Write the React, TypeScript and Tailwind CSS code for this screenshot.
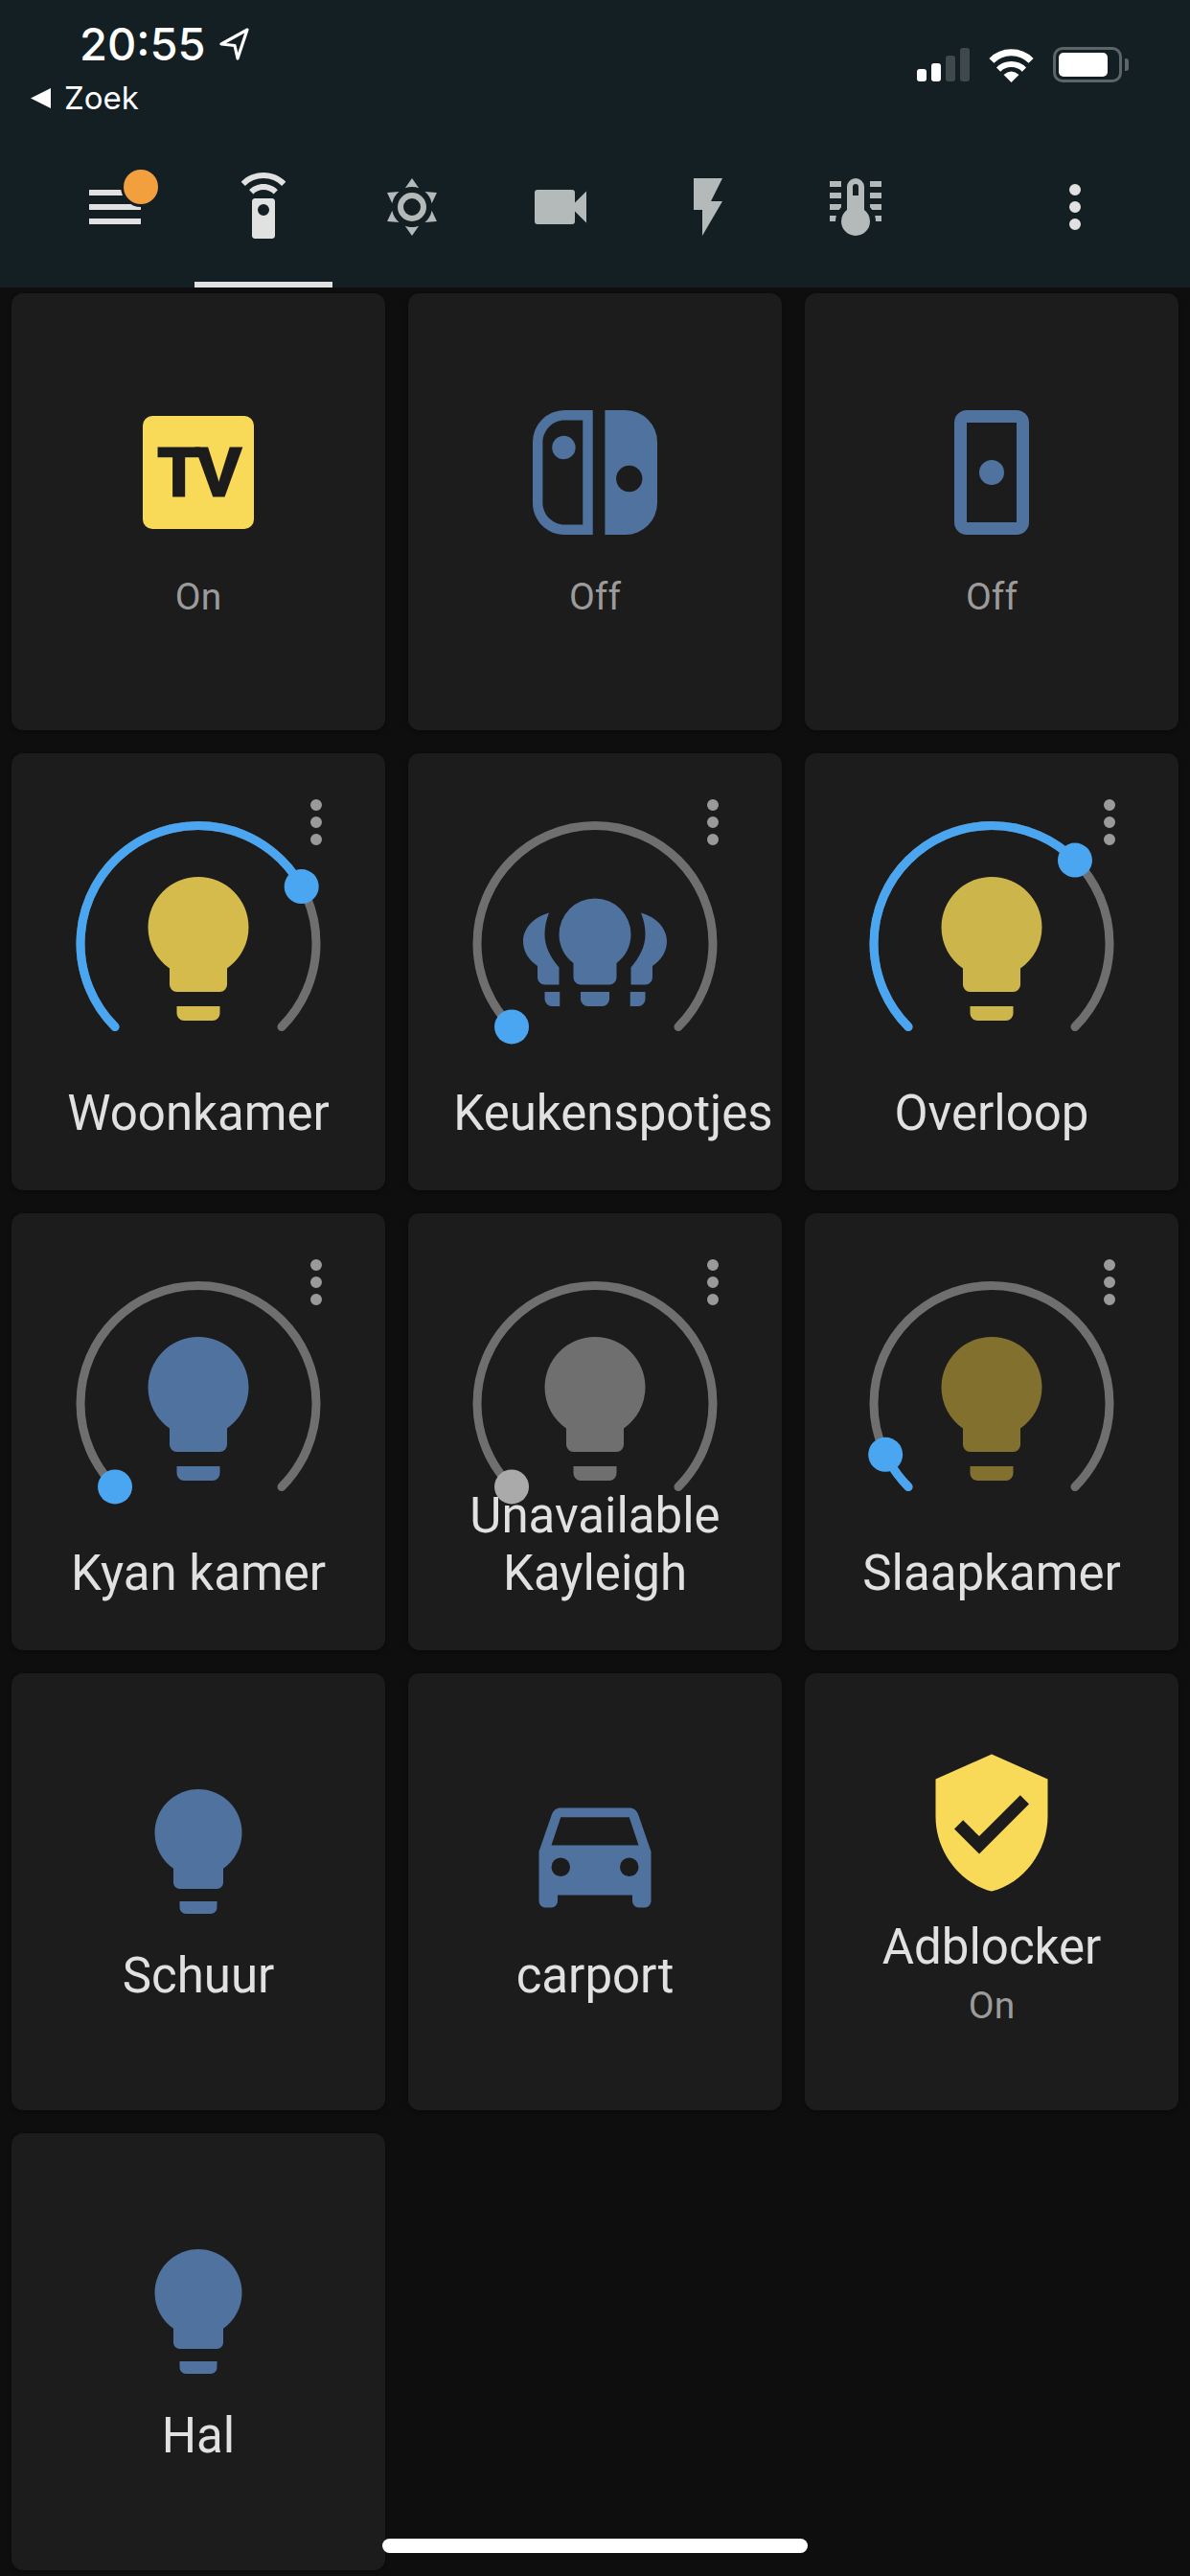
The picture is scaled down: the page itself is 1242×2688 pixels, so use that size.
const BLUE = '#4f729e';
const YELLOW = '#f8da58';

const Mdi = ({ d, size = 72, color = 'currentColor' }: { d: string; size?: number; color?: string }) => (
  <svg width={size} height={size} viewBox="0 0 24 24" className="block shrink-0">
    <path d={d} fill={color} fillRule="evenodd" />
  </svg>
);

const paths = {
  menu: 'M3,6H21V8H3V6M3,11H21V13H3V11M3,16H21V18H3V16Z',
  remote:
    'M12,0C8.96,0 6.21,1.23 4.22,3.22L5.63,4.63C7.26,3 9.5,2 12,2C14.5,2 16.74,3 18.36,4.64L19.78,3.22C17.79,1.23 15.04,0 12,0M7.05,6.05L8.46,7.46C9.37,6.56 10.62,6 12,6C13.38,6 14.63,6.56 15.54,7.46L16.95,6.05C15.68,4.78 13.93,4 12,4C10.07,4 8.32,4.78 7.05,6.05M15,9H9C8.45,9 8,9.45 8,10V22C8,22.55 8.45,23 9,23H15C15.55,23 16,22.55 16,22V10C16,9.45 15.55,9 15,9M12,11A2,2 0 0,1 14,13A2,2 0 0,1 12,15A2,2 0 0,1 10,13A2,2 0 0,1 12,11Z',
  sunny:
    'M12,7A5,5 0 0,1 17,12A5,5 0 0,1 12,17A5,5 0 0,1 7,12A5,5 0 0,1 12,7M12,9A3,3 0 0,0 9,12A3,3 0 0,0 12,15A3,3 0 0,0 15,12A3,3 0 0,0 12,9M12,2L14.39,5.42C13.65,5.15 12.84,5 12,5C11.16,5 10.35,5.15 9.61,5.42L12,2M3.34,7L7.5,6.65C6.9,7.16 6.36,7.78 5.94,8.5C5.5,9.24 5.25,10 5.11,10.79L3.34,7M3.36,17L5.12,13.23C5.26,14 5.53,14.78 5.95,15.5C6.37,16.24 6.91,16.86 7.5,17.37L3.36,17M20.65,7L18.88,10.79C18.74,10 18.47,9.23 18.05,8.5C17.63,7.78 17.1,7.15 16.5,6.64L20.65,7M20.64,17L16.5,17.36C17.09,16.85 17.62,16.22 18.04,15.5C18.46,14.77 18.73,14 18.87,13.21L20.64,17M12,22L9.59,18.56C10.33,18.83 11.14,19 12,19C12.82,19 13.63,18.83 14.37,18.56L12,22Z',
  video: 'M17,10.5V7A1,1 0 0,0 16,6H4A1,1 0 0,0 3,7V17A1,1 0 0,0 4,18H16A1,1 0 0,0 17,17V13.5L21,17.5V6.5L17,10.5Z',
  flash: 'M7,2V13H10V22L17,10H13L17,2H7Z',
  thermo:
    'M17,3H21V5H17V3M17,7H21V9H17V7M17,11H21V13H17.75L17,12.1V11M21,15V17H19C19,16.31 18.9,15.63 18.71,15H21M7,3V5H3V3H7M7,7V9H3V7H7M7,11V12.1L6.25,13H3V11H7M3,15H5.29C5.1,15.63 5,16.31 5,17H3V15M15,13V5A3,3 0 0,0 12,2A3,3 0 0,0 9,5V13A5,5 0 0,0 7,17A5,5 0 0,0 12,22A5,5 0 0,0 17,17A5,5 0 0,0 15,13M12,4A1,1 0 0,1 13,5V8H11V5A1,1 0 0,1 12,4Z',
  dots: 'M12,16A2,2 0 0,1 14,18A2,2 0 0,1 12,20A2,2 0 0,1 10,18A2,2 0 0,1 12,16M12,10A2,2 0 0,1 14,12A2,2 0 0,1 12,14A2,2 0 0,1 10,12A2,2 0 0,1 12,10M12,4A2,2 0 0,1 14,6A2,2 0 0,1 12,8A2,2 0 0,1 10,6A2,2 0 0,1 12,4Z',
  bulb: 'M12,2A7,7 0 0,0 5,9C5,11.38 6.19,13.47 8,14.74V17A1,1 0 0,0 9,18H15A1,1 0 0,0 16,17V14.74C17.81,13.47 19,11.38 19,9A7,7 0 0,0 12,2M9,21A1,1 0 0,0 10,22H14A1,1 0 0,0 15,21V20H9V21Z',
  group:
    'M12,5A5,5 0 0,0 7,10C7,11.7 7.8,13.1 9,14V16A1,1 0 0,0 10,17H14A1,1 0 0,0 15,16V14C16.2,13.1 17,11.7 17,10A5,5 0 0,0 12,5M10,18V19A1,1 0 0,0 11,20H13A1,1 0 0,0 14,19V18H10M5.6,7C3.5,7.6 2,9.1 2,11C2,12.4 2.8,13.6 4,14.4V16A1,1 0 0,0 5,17H7V14.6C5.8,13.2 5,11.7 5,10C5,9 5.2,8 5.6,7M5,18V19A1,1 0 0,0 6,20H7.1V18H5M18.4,7C20.5,7.6 22,9.1 22,11C22,12.4 21.2,13.6 20,14.4V16A1,1 0 0,1 19,17H17V14.6C18.2,13.2 19,11.7 19,10C19,9 18.8,8 18.4,7M19,18V19A1,1 0 0,1 18,20H16.9V18H19Z',
  nintendo:
    'M10.04,20.4H7.12C6.19,20.4 5.3,20 4.64,19.36C4,18.7 3.6,17.81 3.6,16.88V7.12C3.6,6.19 4,5.3 4.64,4.64C5.3,4 6.19,3.62 7.12,3.62H10.04V20.4M7.12,2A5.12,5.12 0 0,0 2,7.12V16.88C2,19.71 4.29,22 7.12,22H11.65V2H7.12M7,6.12A1.88,1.88 0 0,1 8.87,8A1.88,1.88 0 0,1 7,9.88A1.88,1.88 0 0,1 5.11,8A1.88,1.88 0 0,1 7,6.12M13.6,2H16.88A5.12,5.12 0 0,1 22,7.12V16.88A5.12,5.12 0 0,1 16.88,22H13.6V2M17.5,10.9A2.1,2.1 0 0,0 15.4,13A2.1,2.1 0 0,0 17.5,15.1A2.1,2.1 0 0,0 19.6,13A2.1,2.1 0 0,0 17.5,10.9Z',
  joycon:
    'M8,2H16A2,2 0 0,1 18,4V20A2,2 0 0,1 16,22H8A2,2 0 0,1 6,20V4A2,2 0 0,1 8,2M8,4V20H16V4H8M12,10A2,2 0 0,1 14,12A2,2 0 0,1 12,14A2,2 0 0,1 10,12A2,2 0 0,1 12,10Z',
  car: 'M5,11L6.5,6.5H17.5L19,11H5M17.5,13A1.5,1.5 0 0,0 16,14.5A1.5,1.5 0 0,0 17.5,16A1.5,1.5 0 0,0 19,14.5A1.5,1.5 0 0,0 17.5,13M6.5,13A1.5,1.5 0 0,0 5,14.5A1.5,1.5 0 0,0 6.5,16A1.5,1.5 0 0,0 8,14.5A1.5,1.5 0 0,0 6.5,13M18.92,6C18.72,5.42 18.16,5 17.5,5H6.5C5.84,5 5.28,5.42 5.08,6L3,12V20A1,1 0 0,0 4,21H5A1,1 0 0,0 6,20V19H18V20A1,1 0 0,0 19,21H20A1,1 0 0,0 21,20V12L18.92,6Z',
  shield:
    'M12,1L3,5V11C3,16.55 6.84,21.74 12,23C17.16,21.74 21,16.55 21,11V5L12,1M10,17L6,13L7.41,11.59L10,14.17L16.59,7.58L18,9L10,17Z',
};

// round slider, 270 degree sweep starting bottom left
const CX = 145;
const CY = 144.5;
const R = 123;
const point = (a: number) => {
  const t = ((135 + a) * Math.PI) / 180;
  return { x: CX + R * Math.cos(t), y: CY + R * Math.sin(t) };
};
const arc = (from: number, to: number) => {
  const p0 = point(from);
  const p1 = point(to);
  return `M${p0.x} ${p0.y} A${R} ${R} 0 ${to - from > 180 ? 1 : 0} 1 ${p1.x} ${p1.y}`;
};

const SliderTile = ({
  name,
  value,
  color,
  icon = paths.bulb,
  knob = '#4aa6f0',
  status,
  shift,
}: {
  name: string;
  value: number;
  color: string;
  icon?: string;
  knob?: string;
  status?: string;
  shift?: boolean;
}) => {
  const k = point(value);
  return (
    <div className="relative flex h-[456px] flex-col items-center justify-end overflow-hidden rounded-[12px] bg-[#1c1c1c] pb-[50px] shadow-[0_2px_4px_rgba(0,0,0,0.3)]">
      <svg width={290} height={290} viewBox="0 0 290 290" className="absolute left-[50px] top-[54px]">
        <path d={arc(0, 270)} fill="none" stroke="#6f6f6f" strokeWidth={9} strokeLinecap="round" />
        {value > 0 && <path d={arc(0, value)} fill="none" stroke="#4aa6f0" strokeWidth={9} strokeLinecap="round" />}
        <svg x={55} y={60} width={180} height={180} viewBox="0 0 24 24">
          <path d={icon} fill={color} fillRule="evenodd" />
        </svg>
        <circle cx={k.x} cy={k.y} r={18} fill={knob} />
      </svg>
      <div className="absolute right-[36px] top-[36px] text-[#9a9a9a]">
        <Mdi d={paths.dots} />
      </div>
      {status && <div className="relative whitespace-nowrap text-[51px] leading-[60px] text-[#e1e1e1]">{status}</div>}
      <div className={`relative whitespace-nowrap text-[51px] leading-[60px] text-[#e1e1e1] ${shift ? 'ml-[38px]' : ''}`}>{name}</div>
    </div>
  );
};

const Tile = ({ icon, name, state }: { icon: React.ReactNode; name?: string; state?: string }) => (
  <div className="flex h-[456px] flex-col items-center justify-center rounded-[12px] bg-[#1c1c1c] shadow-[0_2px_4px_rgba(0,0,0,0.3)]">
    {icon}
    {name && <div className={`mt-[22px] whitespace-nowrap text-[51px] leading-[60px] text-[#e1e1e1] ${state ? '' : 'mb-[2px]'}`}>{name}</div>}
    {state && <div className={`pb-[8px] text-[39px] leading-[46px] text-[#9b9b9b] ${name ? 'mt-[8px]' : 'mt-[29px]'}`}>{state}</div>}
  </div>
);

const TvLogo = () => (
  <div className="flex h-[156px] w-[156px] items-center justify-center">
    <div className="flex h-[118px] w-[116px] items-center justify-center rounded-[10px] bg-[#f8da58]">
      <span className="font-['Liberation_Sans',sans-serif] text-[70px] font-bold leading-none tracking-[-3px] text-[#1c1c1c] [-webkit-text-stroke:3px_#1c1c1c]">TV</span>
    </div>
  </div>
);

const StatusBar = () => (
  <div className="flex h-[180px] items-start justify-between text-white">
    <div className="font-['Inter',sans-serif]">
      <div className="flex items-center pl-[83px] pt-[18px]">
        <span className="text-[47px] font-medium leading-[56px]">20:55</span>
        <svg width="34" height="36" viewBox="0 0 34 36" className="ml-[13px]">
          <path d="M30 3 L3 18 L17 19.5 L20 33 Z" fill="none" stroke="white" strokeWidth="3.2" strokeLinejoin="round" />
        </svg>
      </div>
      <div className="flex items-center pl-[32px] pt-[8px]">
        <svg width="21" height="21" viewBox="0 0 21 21">
          <path d="M0 10.5 L21 0 V21 Z" fill="white" />
        </svg>
        <span className="ml-[14px] text-[33px] leading-[40px]">Zoek</span>
      </div>
    </div>
    <div className="flex items-center gap-[20px] pr-[64px] pt-[49px]">
      <div className="flex h-[35px] items-end gap-[5px]">
        <div className="h-[13px] w-[10px] rounded-[3px] bg-white" />
        <div className="h-[19px] w-[10px] rounded-[3px] bg-white" />
        <div className="h-[27px] w-[10px] rounded-[3px] bg-[#3f494c]" />
        <div className="h-[35px] w-[10px] rounded-[3px] bg-[#3f494c]" />
      </div>
      <svg width="47" height="36" viewBox="0 0 47 36">
        <path d="M2.9 13.4 A29 29 0 0 1 44.1 13.4" fill="none" stroke="white" strokeWidth="7" />
        <path d="M10.1 22.6 A19 19 0 0 1 36.9 22.6" fill="none" stroke="white" strokeWidth="6" />
        <path d="M23.5 36 L15.5 28 Q23.5 21 31.5 28 Z" fill="white" />
      </svg>
      <div className="flex items-center">
        <div className="h-[37px] w-[72px] rounded-[10px] border-[3px] border-[#5c6669] p-[3px]">
          <div className="h-full w-[51px] rounded-[5px] bg-white" />
        </div>
        <div className="ml-[3px] h-[13px] w-[4px] rounded-r-[3px] bg-[#5c6669]" />
      </div>
    </div>
  </div>
);

const tabs = [paths.sunny, paths.video, paths.flash, paths.thermo];

const Header = () => (
  <div className="h-[300px] bg-[#141f24]">
    <StatusBar />
    <div className="flex h-[120px] pl-[43px] pr-[84px]">
      <div className="relative w-[154px] text-[#e1e1e1]">
        <div className="flex justify-center">
          <Mdi d={paths.menu} />
        </div>
        <div className="absolute left-[86px] top-[-3px] h-[36px] w-[36px] rounded-full bg-[#f2a03d] ring-[3px] ring-[#141f24]" />
      </div>
      <div className="flex w-[156px] flex-col items-center text-[#e1e1e1]">
        <Mdi d={paths.remote} />
        <div className="mt-auto h-[6px] w-[144px] bg-[#e1e1e1]" />
      </div>
      {tabs.map((d) => (
        <div key={d} className="flex w-[154.4px] justify-center text-[#b4b9ba]">
          <Mdi d={d} />
        </div>
      ))}
      <div className="ml-auto text-[#e1e1e1]">
        <Mdi d={paths.dots} />
      </div>
    </div>
  </div>
);

export default function App() {
  return (
    <div className="relative h-[2688px] w-[1242px] overflow-hidden bg-[#0e0e0e] font-['Roboto',sans-serif]">
      <Header />
      <div className="grid grid-cols-3 gap-[24px] px-[12px] pt-[6px]">
        <Tile icon={<TvLogo />} state="On" />
        <Tile icon={<Mdi d={paths.nintendo} size={156} color={BLUE} />} state="Off" />
        <Tile icon={<Mdi d={paths.joycon} size={156} color={BLUE} />} state="Off" />

        <SliderTile name="Woonkamer" value={196.1} color="#d4bb4c" />
        <SliderTile name="Keukenspotjes" value={0} color={BLUE} icon={paths.group} shift />
        <SliderTile name="Overloop" value={180} color="#ccb54a" />

        <SliderTile name="Kyan kamer" value={0} color={BLUE} />
        <SliderTile name="Kayleigh" value={0} color="#6f6f6f" knob="#aaaaaa" status="Unavailable" />
        <SliderTile name="Slaapkamer" value={19.3} color="#82702e" />

        <Tile icon={<Mdi d={paths.bulb} size={156} color={BLUE} />} name="Schuur" />
        <Tile icon={<Mdi d={paths.car} size={156} color={BLUE} />} name="carport" />
        <Tile icon={<Mdi d={paths.shield} size={156} color={YELLOW} />} name="Adblocker" state="On" />

        <Tile icon={<Mdi d={paths.bulb} size={156} color={BLUE} />} name="Hal" />
      </div>
      <div className="absolute bottom-[24px] left-[399px] h-[15px] w-[444px] rounded-full bg-white" />
    </div>
  );
}
